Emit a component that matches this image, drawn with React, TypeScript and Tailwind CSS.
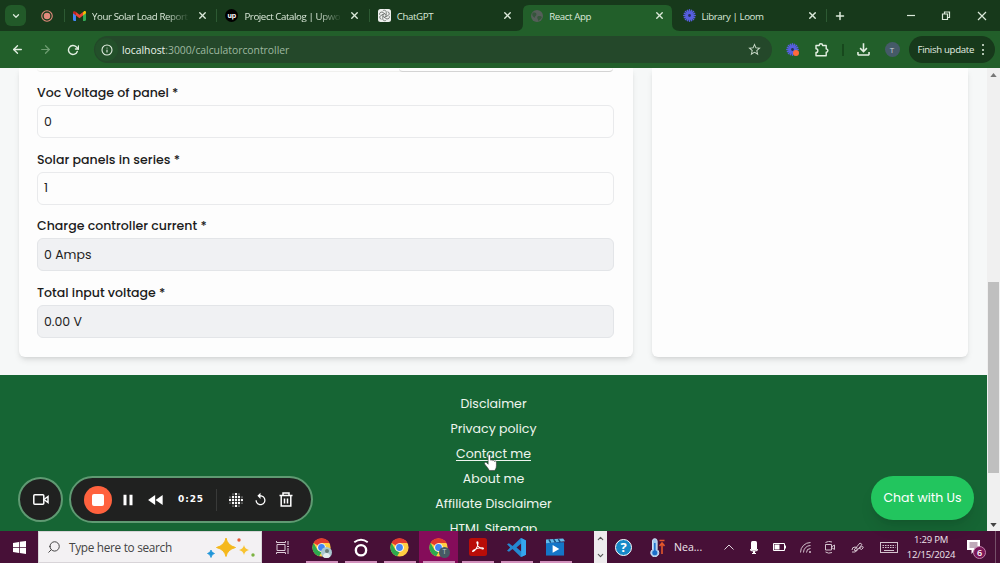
import React from "react";
import {
  FiArrowLeft,
  FiArrowRight,
  FiChevronDown,
  FiChevronUp,
  FiInfo,
  FiPlus,
  FiRotateCw,
  FiSearch,
  FiX,
} from "react-icons/fi";
import {
  MdFastRewind,
  MdOutlineFileDownload,
  MdPause,
  MdReplay,
  MdStarBorder,
} from "react-icons/md";

const FIELDS = [
  { label: "Voc Voltage of panel *", value: "0", readOnly: false },
  { label: "Solar panels in series *", value: "1", readOnly: false },
  { label: "Charge controller current *", value: "0 Amps", readOnly: true },
  { label: "Total input voltage *", value: "0.00 V", readOnly: true },
];

const FOOTER_LINKS = [
  { name: "Disclaimer" },
  { name: "Privacy policy" },
  { name: "Contact me", hovered: true },
  { name: "About me" },
  { name: "Affiliate Disclaimer" },
  { name: "HTML Sitemap" },
];

function GmailIcon() {
  return (
    <svg viewBox="0 0 24 18" className="w-[13px] h-[10px]">
      <path d="M0 3v13a2 2 0 0 0 2 2h3.500V7z" fill="#4285f4" />
      <path d="M24 3v13a2 2 0 0 1-2 2h-3.500V7z" fill="#34a853" />
      <path d="M18.500 2v6L24 4V2.500C24 0 21.500-.8 19.800.8z" fill="#fbbc04" />
      <path d="M5.500 8V1.500L12 6.500l6.500-5V8L12 13z" fill="#ea4335" />
      <path d="M0 2.500V4l5.500 4V1.500L4.200.6C2.400-.7 0 .3 0 2.500z" fill="#c5221f" />
    </svg>
  );
}

function UpworkIcon() {
  return (
    <span className="flex size-[13px] items-center justify-center rounded-full bg-black pb-px font-['Inter'] text-[7px] leading-none font-bold text-white">
      up
    </span>
  );
}

function ChatGptIcon() {
  return (
    <svg viewBox="0 0 26 26" className="size-[13px]">
      <rect width="26" height="26" rx="5" fill="#eef0ee" />
      <g fill="none" stroke="#555c57" strokeWidth="1.400">
        {[0, 60, 120, 180, 240, 300].map((angle) => (
          <path key={angle} d="M13 9.500l3.500 2V5.500a4 4 0 0 0-7-1.500" transform={`rotate(${angle} 13 13)`} />
        ))}
      </g>
    </svg>
  );
}

function GlobeIcon() {
  return (
    <svg viewBox="0 0 22 22" className="size-[12px]">
      <circle cx="11" cy="11" r="11" fill="#555e59" />
      <path d="M3 5c4-1 7 0 7 3s-3 3-3 6c-3-1-6-4-4-9zM12 12c4-2 7 0 8 1-1 3-4 6-7 7 1-3-3-5-1-8z" fill="#35563b" />
    </svg>
  );
}

function LoomIcon({ className }: { className: string }) {
  return (
    <svg viewBox="0 0 24 24" className={className}>
      <g stroke="#565ee0" strokeWidth="2.800" strokeLinecap="round">
        <path d="M12 1.500v21M1.500 12h21M4.600 4.600l14.800 14.800M19.400 4.600L4.600 19.400M8 2.500l8 19M16 2.500l-8 19M2.500 8l19 8M2.500 16l19-8" />
      </g>
      <circle cx="12" cy="12" r="2.600" fill="#25305c" />
    </svg>
  );
}

function PuzzleIcon() {
  return (
    <svg viewBox="0 0 15 15" className="size-[15px] fill-none stroke-current" strokeWidth="1.400">
      <path d="M2 3.500h3.200a1.700 1.700 0 0 1 3.400 0h3.600v3.400a1.700 1.700 0 0 1 0 3.400v3.400H2v-3.200a1.800 1.800 0 0 0 0-3.700z" strokeLinejoin="round" />
    </svg>
  );
}

function ChromeIcon() {
  return (
    <svg viewBox="0 0 48 48" className="size-[19px]">
      <circle cx="24" cy="24" r="23" fill="#ffcd42" />
      <path d="M24 24L4 12.500A23 23 0 0 1 44 12.500H24z" fill="#e33b2e" />
      <path d="M4 12.500L14 30l10 6-6 10.200A23 23 0 0 1 4 12.500z" fill="#2da94f" />
      <circle cx="24" cy="24" r="11" fill="#fff" />
      <circle cx="24" cy="24" r="8.600" fill="#4285f4" />
    </svg>
  );
}

const TABS = [
  { title: "Your Solar Load Report", icon: <GmailIcon />, fade: true, divider: true },
  { title: "Project Catalog | Upwo", icon: <UpworkIcon />, fade: true, divider: true },
  { title: "ChatGPT", icon: <ChatGptIcon />, divider: true },
  { title: "React App", icon: <GlobeIcon />, active: true },
  { title: "Library | Loom", icon: <LoomIcon className="size-[13px]" /> },
];

function TabStrip() {
  return (
    <div className="flex h-[31px] bg-[#17391b] text-[#dbe9da]">
      <div className="flex w-[64px] items-center pl-[5px]">
        <div className="flex size-[21px] items-center justify-center rounded-md bg-[#225a29]">
          <FiChevronDown className="size-[10px]" strokeWidth={3} />
        </div>
        <svg viewBox="0 0 24 24" className="ml-[15px] size-[12px]">
          <circle cx="12" cy="12" r="10.500" fill="none" stroke="#e28a7c" strokeWidth="2.200" />
          <circle cx="12" cy="12" r="6.500" fill="#e28a7c" />
        </svg>
      </div>

      {TABS.map((tab) => (
        <div key={tab.title} className="relative flex w-[152.4px] items-center">
          {tab.divider && <div className="h-[13px] w-px bg-[#2d5a33]" />}
          {tab.active && (
            <svg viewBox="0 0 164 31" className="absolute -left-[5px] bottom-0 h-[31px] w-[164px]">
              <path d="M0 31q7 0 7-7V11q0-6 6-6h137q6 0 6 6v13q0 7 8 7z" fill="#225f2a" />
            </svg>
          )}
          <div className={`relative flex items-center ${tab.divider ? "ml-[8px]" : "ml-[9px]"}`}>
            <div className="flex w-[13px] justify-center">{tab.icon}</div>
            <div
              className={`ml-[6px] w-[98px] pt-[2px] text-[9.7px] leading-[16px] tracking-[-0.4px] whitespace-nowrap ${
                tab.fade ? "[mask-image:linear-gradient(to_right,black_75%,transparent_100%)]" : ""
              }`}
            >
              {tab.title}
            </div>
            <FiX className="ml-[7px] size-[11px]" strokeWidth={3} />
          </div>
        </div>
      ))}

      <div className="flex flex-1 items-center">
        <div className="h-[13px] w-px bg-[#2d5a33]" />
        <FiPlus className="ml-[7px] size-[12px]" strokeWidth={3} />
        <svg viewBox="0 0 80 10" className="ml-auto mr-[13px] h-[10px] w-[80px] fill-none stroke-current" strokeWidth="1.200">
          <path d="M0 4.500h8" />
          <path d="M35.500 3h5v5.500h-5zM37.500 2.500V1h5v5.500h-1.500" />
          <path d="M71 1l8 8M79 1l-8 8" />
        </svg>
      </div>
    </div>
  );
}

function Toolbar() {
  return (
    <div className="flex h-[37px] items-center bg-[#225f2a] pl-[11px] text-[#e3efe2]">
      <FiArrowLeft className="size-[13px]" strokeWidth={2.500} />
      <FiArrowRight className="ml-[15px] size-[13px] text-[#6d9c70]" strokeWidth={2.300} />
      <FiRotateCw className="ml-[15px] size-[12px]" strokeWidth={2.800} />
      <div className="ml-[15px] flex h-[27px] w-[678px] items-center rounded-full bg-[#24482a] px-[1px]">
        <div className="flex size-[23px] items-center justify-center rounded-full bg-[#23502a]">
          <FiInfo className="size-[12px]" strokeWidth={2.200} />
        </div>
        <div className="ml-[4px] text-[10.4px] leading-[16px] tracking-[-0.03px] text-[#9fb8a0]">
          <span className="text-[#eaf3e9]">localhost</span>:3000/calculatorcontroller
        </div>
        <MdStarBorder className="mr-[9px] ml-auto size-[15px] text-[#c8d9c7]" />
      </div>
      <div className="relative ml-[14px]">
        <LoomIcon className="size-[13px]" />
        <div className="absolute right-0 bottom-0 size-[6px] rounded-full bg-[#ff6a3d]" />
      </div>
      <div className="ml-[15px]">
        <PuzzleIcon />
      </div>
      <div className="ml-[13px] h-[12px] w-[1.5px] bg-[#17481d]" />
      <MdOutlineFileDownload className="ml-[10px] size-[19px]" />
      <div className="ml-[12px] flex size-[15px] items-center justify-center rounded-full bg-[#455a68] text-[8px] text-[#c9d3d8]">
        T
      </div>
      <div className="ml-[9px] flex h-[27px] w-[86px] items-center rounded-full bg-[#17391b] pl-[9px]">
        <span className="pt-px text-[9.6px] tracking-[-0.3px] whitespace-nowrap">Finish update</span>
        <div className="ml-auto mr-[11px] flex flex-col gap-[2.5px]">
          <div className="size-[2px] rounded-full bg-[#e3efe2]" />
          <div className="size-[2px] rounded-full bg-[#e3efe2]" />
          <div className="size-[2px] rounded-full bg-[#e3efe2]" />
        </div>
      </div>
    </div>
  );
}

function CalculatorForm() {
  return (
    <div className="h-[288.5px] w-[614px] rounded-b-md bg-[#fdfdfd] px-[18.5px] shadow-md">
      <div className="flex h-[4px] w-[576px] justify-end rounded-b-md border-b border-[#f0f0ee]">
        <div className="h-[4px] w-[214px] rounded-b-sm border-b border-[#d4d4d4]" />
      </div>
      <div className="pt-[11px]">
        {FIELDS.map((field) => (
          <div key={field.label} className="h-[66.7px]">
            <div className="h-[22px] text-[12.55px] leading-[19px] font-medium text-[#1b1b1b]">{field.label}</div>
            <div
              className={`flex h-[33px] items-center rounded-md border px-[6px] pt-px text-[12.5px] text-[#222] ${
                field.readOnly ? "border-[#e3e5e8] bg-[#f0f1f3]" : "border-[#e9eaec] bg-[#fdfdfd]"
              }`}
            >
              {field.value}
            </div>
          </div>
        ))}
      </div>
    </div>
  );
}

function HandCursor() {
  return (
    <svg viewBox="0 0 22 28" className="absolute top-[13px] left-[28px] h-[17px] w-[13px]">
      <path
        d="M7 2.500a2 2 0 0 1 4 0V10l1 .3a1.800 1.800 0 0 1 3 .8 1.800 1.800 0 0 1 3 1 1.700 1.700 0 0 1 3 1.400v6c0 4-2 7-3 8H9c-2-4-5-7-8-11-1-2 1-4 3-2.500l3 3z"
        fill="#fff"
        stroke="#333"
        strokeWidth="1"
      />
    </svg>
  );
}

function Footer() {
  return (
    <div className="flex h-[156px] flex-col items-center overflow-hidden bg-[#166534] pt-[15.4px] text-[12.55px] text-[#eef5ef]">
      {FOOTER_LINKS.map((link) => (
        <div key={link.name} className="relative h-[25px] shrink-0 leading-[25px]">
          <span className={link.hovered ? "underline underline-offset-2" : ""}>{link.name}</span>
          {link.hovered && <HandCursor />}
        </div>
      ))}
    </div>
  );
}

function Scrollbar() {
  return (
    <div className="flex w-[13px] flex-col items-center bg-[#f0f0f0]">
      <svg viewBox="0 0 8 5" className="mt-[5px] h-[4px] w-[7px] fill-[#777]">
        <path d="M0 5l4-5 4 5z" />
      </svg>
      <div className="mt-[205px] h-[191px] w-[11px] bg-[#bfbfbf]" />
      <svg viewBox="0 0 8 5" className="mt-auto mb-[4px] h-[4px] w-[7px] fill-[#444]">
        <path d="M0 0l4 5 4-5z" />
      </svg>
    </div>
  );
}

const BLUR_DOTS = [1, 4, 7, 10, 13];

function RecorderControls() {
  return (
    <div className="absolute top-[476px] left-[18px] flex items-center gap-[6px] text-white">
      <div className="flex size-[45px] items-center justify-center rounded-full border-[2.5px] border-[#5f9a72] bg-[#202120]">
        <svg viewBox="0 0 16 11" className="h-[11px] w-[16px] fill-none stroke-white" strokeWidth="1.500">
          <rect x=".8" y=".8" width="10" height="9.400" rx="1" />
          <path d="M11 5.500l4-3v6z" />
        </svg>
      </div>
      <div className="flex h-[47px] w-[244px] items-center rounded-full border-[2.5px] border-[#5f9a72] bg-[#202120] pl-[13px]">
        <div className="flex size-[28px] items-center justify-center rounded-full bg-[#ff623e]">
          <div className="size-[12px] rounded-[2px] bg-white" />
        </div>
        <MdPause className="ml-[7px] size-[18px]" />
        <MdFastRewind className="ml-[9px] size-[20px]" />
        <div className="ml-[12px] w-[28px] pt-px font-['DejaVu_Sans'] text-[9px] font-bold tracking-[0.9px]">0:25</div>
        <div className="ml-[10px] h-[22px] w-px bg-[#393a39]" />
        <svg viewBox="0 0 14 14" className="ml-[12px] size-[14px] fill-white">
          {BLUR_DOTS.map((y) =>
            BLUR_DOTS.map((x) => {
              const distance = Math.abs(x - 7) + Math.abs(y - 7);
              return distance > 9 ? null : (
                <circle key={`${x}-${y}`} cx={x} cy={y} r={distance < 7 ? 1.2 : 0.6} />
              );
            })
          )}
        </svg>
        <MdReplay className="ml-[10px] size-[15px]" />
        <svg viewBox="0 0 14 15" className="ml-[11px] h-[15px] w-[14px] fill-none stroke-white" strokeWidth="1.500">
          <path d="M0.500 3.500h13M4 3V1h6v2M2.200 3.500v10.500h9.600V3.500M5.500 6.500v5M8.500 6.500v5" />
        </svg>
      </div>
    </div>
  );
}

function AppSlot({ children, active = false }: { children: React.ReactNode; active?: boolean }) {
  return (
    <div className={`flex w-[39px] flex-col items-center ${active ? "bg-[#850c5a]" : ""}`}>
      <div className="flex h-[30px] items-center pt-[2px]">{children}</div>
      <div className="h-[2px] w-[32px] bg-[#d291bd]" />
    </div>
  );
}

function SearchBox() {
  return (
    <div className="flex w-[224px] items-center border border-[#d8d4d8] bg-[#f3f1f3] pl-[8px] text-[#444]">
      <FiSearch className="size-[14px] -scale-x-100" strokeWidth={1.700} />
      <span className="ml-[8px] pt-[2px] text-[11.8px] tracking-[-0.3px] whitespace-nowrap">Type here to search</span>
      <svg viewBox="0 0 50 22" className="mr-[6px] ml-auto h-[22px] w-[50px]">
        <path d="M21 2q1.500 7.500 9.500 9.500-8 2-9.500 9-1.500-7-9.500-9 8-2 9.500-9.500z" fill="#f5b81c" stroke="#f5b81c" strokeLinejoin="round" />
        <path d="M39 9q.7 4 5 5-4.300 1-5 5-.7-4-5-5 4.300-1 5-5z" fill="#f8c331" />
        <path d="M6 14q.8 3 3.500 3.500Q6.800 18 6 21.500 5.200 18 2.500 17.500 5.200 17 6 14z" fill="#2196d9" stroke="#2196d9" strokeWidth=".8" />
        <circle cx="34" cy="4" r="1.700" fill="#e45c35" />
        <circle cx="48" cy="19" r="1.700" fill="#7cb342" />
      </svg>
    </div>
  );
}

function Taskbar() {
  return (
    <div className="flex h-[32px] bg-[#471037] text-[#efe6ed]">
      <div className="flex w-[38px] items-center justify-center">
        <svg viewBox="0 0 26 26" className="size-[13px] fill-white">
          <path d="M0 4l12-2v10H0zM13.500 1.700L26 0v12H13.500zM0 13.500h12v10.300L0 22zM13.500 13.500H26V26l-12.500-1.900z" />
        </svg>
      </div>
      <SearchBox />
      <div className="flex w-[40px] items-center justify-center">
        <svg viewBox="0 0 13 13" className="size-[13px] fill-none stroke-[#dccbd7]" strokeWidth="1">
          <path d="M1 3.500h8v6H1zM.5 0v1.500h9V0M.5 13v-1.500h9V13M12 0v4M12 7v6M11 5.500h2" />
        </svg>
      </div>

      <AppSlot>
        <div className="relative">
          <ChromeIcon />
          <div className="absolute -right-[1px] -bottom-[1px] size-[11px] overflow-hidden rounded-full bg-[#a9c8d0]">
            <div className="mx-auto mt-[2px] size-[4px] rounded-full bg-[#667d78]" />
            <div className="mx-auto h-[5px] w-[7px] rounded-t-full bg-[#e5edef]" />
          </div>
        </div>
      </AppSlot>
      <AppSlot>
        <svg viewBox="0 0 20 24" className="h-[19px] w-[16px] fill-none stroke-white">
          <circle cx="10" cy="15.500" r="6.500" strokeWidth="3" />
          <path d="M1.500 5.500q8.500-6.500 17 0" strokeWidth="2.400" />
        </svg>
      </AppSlot>
      <AppSlot>
        <ChromeIcon />
      </AppSlot>
      <AppSlot active>
        <div className="relative">
          <ChromeIcon />
          <div className="absolute -right-[2px] -bottom-[1px] flex size-[11px] items-center justify-center rounded-full bg-[#455a64] text-[7px] text-[#c3ced3]">
            T
          </div>
        </div>
      </AppSlot>
      <AppSlot>
        <svg viewBox="0 0 18 18" className="size-[18px]">
          <rect width="18" height="18" rx="2.500" fill="#b90d08" />
          <path
            d="M4 13.500c2-.5 5-4.500 5-8.500 0-2-1.500-1.500-1 0 .7 3 3 5.500 5.500 6 1.500.2 1.200-1.200-.5-1.200-3 0-6.500 1-8.500 2.500-1 .8-1.200 1.300-.5 1.200z"
            fill="none"
            stroke="#fff"
            strokeWidth="1.100"
          />
        </svg>
      </AppSlot>
      <AppSlot>
        <svg viewBox="0 0 24 24" className="size-[19px]">
          <path d="M17.500 0L24 3v18l-6.500 3L7 14l-4.500 3.500L0 16l4-4-4-4 2.500-1.500L7 10zM18 7l-6 5 6 5z" fill="#2488d0" fillRule="evenodd" />
          <path d="M18 0l6 3v18l-6 3z" fill="#35a5ef" />
        </svg>
      </AppSlot>
      <AppSlot>
        <svg viewBox="0 0 20 18" className="h-[18px] w-[19px]">
          <rect y="4" width="19" height="14" fill="#1476c8" />
          <path d="M0 1l18-1 2 3L0 5z" fill="#64bcec" />
          <path d="M3 1l2 3.500M8 .8l2 3.200M13 .6l2 3.200" stroke="#174b7b" strokeWidth="1.500" />
          <path d="M7 7v8l7-4z" fill="#fff" />
        </svg>
      </AppSlot>

      <div className="ml-[19px] flex w-[13px] flex-col items-center justify-between bg-[#eeecee] py-[3px] text-[#555]">
        <FiChevronUp className="size-[9px]" strokeWidth={3} />
        <FiChevronDown className="size-[9px]" strokeWidth={3} />
      </div>
      <div className="ml-[8px] flex items-center">
        <div className="flex size-[17px] items-center justify-center rounded-full border-[1.5px] border-white bg-[#1789c8] text-[13px] leading-none font-bold text-white">
          ?
        </div>
      </div>
      <div className="ml-[18px] flex w-[24px] items-center">
        <svg viewBox="0 0 15 19" className="h-[19px] w-[15px]">
          <path d="M2.500 3a2.300 2.300 0 0 1 4.600 0v8.500a4 4 0 1 1-4.600 0z" fill="#9fc7ee" stroke="#cfe2f6" />
          <path d="M4.800 5v9" stroke="#1b6fca" strokeWidth="1.500" />
          <circle cx="4.800" cy="14.700" r="2.500" fill="#1b6fca" />
          <path d="M12 16V6M9.500 8L12 5l2.500 3M9.500 2.500h5" fill="none" stroke="#e4572b" strokeWidth="1.600" />
        </svg>
      </div>
      <div className="flex w-[48px] items-center pt-[2px] text-[10.6px]">Nea...</div>

      {/* System tray */}
      <div className="flex flex-1 items-center">
        <svg viewBox="0 0 10 6" className="ml-[2px] h-[6px] w-[10px] fill-none stroke-[#e0d4dd]">
          <path d="M.5 5.500L5 1l4.500 4.500" />
        </svg>
        <svg viewBox="0 0 8 13" className="ml-[16px] h-[13px] w-[8px] fill-white">
          <rect x="1" width="6" height="9.500" rx="1.500" />
          <path d="M0 8q0 2.500 3 2.500V12H2v1h4v-1H5v-1.500q3 0 3-2.500H7q0 1.500-3 1.500T1 8z" />
        </svg>
        <svg viewBox="0 0 13 8" className="ml-[15px] h-[8px] w-[13px]">
          <path d="M.5.5h11v7H.5zM12.500 2.500v3" fill="none" stroke="#fff" />
          <path d="M1.500 1.500h5v5h-5z" fill="#fff" />
        </svg>
        <svg viewBox="0 0 11 11" className="ml-[14px] size-[11px] fill-none stroke-[#d4c3ce]">
          <path d="M.5 10.500a10 10 0 0 1 10-10M3.500 10.500a7 7 0 0 1 7-7M6.500 10.500a4 4 0 0 1 4-4" />
          <path d="M9.500 9.500h1v1h-1z" />
        </svg>
        <svg viewBox="0 0 10 13" className="ml-[14px] h-[13px] w-[10px] fill-none stroke-[#d4c3ce]">
          <path d="M.5 3.500h6v5.500h-6zM6.500 6l3-2v4.500l-3-2M.5 1.500Q3.500-.5 7 1M.5 11q3 2 6.500.5" />
        </svg>
        <svg viewBox="0 0 13 13" className="ml-[16px] size-[13px] fill-none stroke-[#d4c3ce]">
          <path d="M1 9q0-3 3-3t2 3-5 2M3 9l6-7 2 1.500L5.500 10zM8 7q5-3 4 0t-4 0" />
        </svg>
        <svg viewBox="0 0 18 11" className="ml-[16px] h-[11px] w-[18px] fill-none stroke-[#d4c3ce]">
          <rect x=".5" y=".5" width="17" height="10" />
          <path d="M2.500 3.500h13M2.500 5.500h13" strokeDasharray="1.500 1" />
          <path d="M4 8.500h10" />
        </svg>
        <div className="ml-[8px] w-[50px] pt-px text-center text-[9.5px] leading-[14.5px] tracking-[-0.2px] whitespace-nowrap">
          <div>1:29 PM</div>
          <div>12/15/2024</div>
        </div>
        <div className="relative ml-[11px] h-[22px] w-[20px]">
          <svg viewBox="0 0 13 14" className="mt-[4px] h-[14px] w-[13px]">
            <path d="M0 0h13v10H8l-3.500 4v-4H0z" fill="#fff" />
            <path d="M2.500 3h8M2.500 5h8M2.500 7h8" stroke="#471037" strokeWidth=".7" />
          </svg>
          <div className="absolute top-[10px] left-[6px] flex size-[13px] items-center justify-center rounded-full border border-[#c184ac] bg-[#7a1757] text-[9px] leading-none font-semibold text-white">
            6
          </div>
        </div>
        <div className="ml-auto mr-[4px] h-full w-px bg-[#755069]" />
      </div>
    </div>
  );
}

export default function App() {
  return (
    <div className="relative flex h-[563px] w-[1000px] flex-col overflow-hidden font-['Open_Sans',sans-serif]">
      <TabStrip />
      <Toolbar />

      <div className="flex h-[463px] font-['Poppins','Inter',sans-serif]">
        <div className="w-[987px] bg-[#f6f8f8]">
          <div className="flex h-[307.4px] gap-[19px] overflow-hidden pl-[18.5px]">
            <CalculatorForm />
            <div className="h-[288.5px] w-[316px] rounded-b-md bg-[#fdfdfd] shadow-md" />
          </div>
          <Footer />
        </div>
        <Scrollbar />
      </div>

      <Taskbar />

      <RecorderControls />
      <button className="absolute top-[476px] left-[871px] h-[44px] w-[103px] rounded-full bg-[#22c55e] font-['Poppins','Inter',sans-serif] text-[12.5px] text-white shadow-lg">
        Chat with Us
      </button>
    </div>
  );
}
